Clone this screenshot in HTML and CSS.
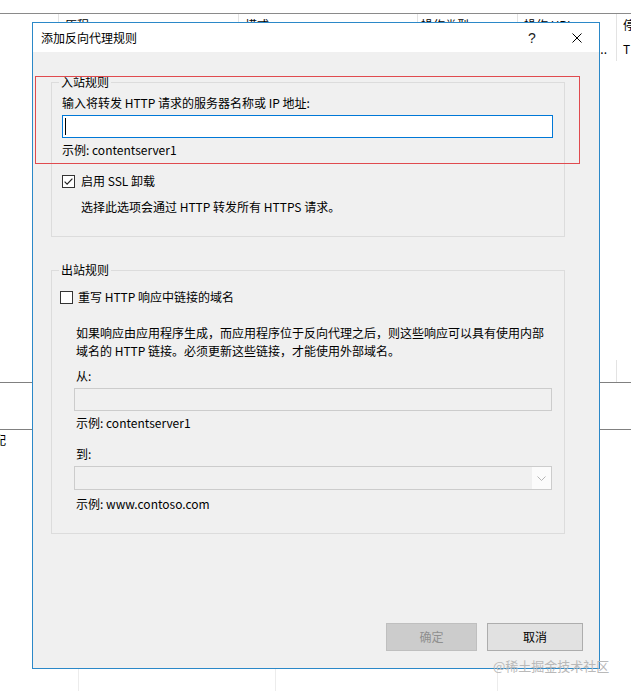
FILE: index.html
```html
<!DOCTYPE html>
<html lang="zh-CN">
<head>
<meta charset="utf-8">
<title>添加反向代理规则</title>
<link rel="stylesheet" href="styles.css">
</head>
<body>
<div class="bg">
  <div class="bg-top"></div>
  <div class="bg-row bg-head">
    <div class="c"></div><div class="c">原程</div><div class="c">模式</div><div class="c c-tight">操作类型</div><div class="c">操作 URL</div><div class="c c-last">停止处理</div>
  </div>
  <div class="bg-row bg-row2">
    <div class="c"></div><div class="c"></div><div class="c"></div><div class="c"></div><div class="c c-right">http://...</div><div class="c c-last">T</div>
  </div>
  <div class="bg-fill1"></div>
  <div class="bg-row bg-row3">
    <div class="c"></div><div class="c"></div><div class="c"></div><div class="c"></div><div class="c"></div><div class="c c-last"></div>
  </div>
  <div class="bg-fill2"></div>
  <div class="bg-row4"><span class="cut">配</span></div>
  <div class="bg-fill3"></div>
  <div class="bg-bottom">
    <div class="b1"></div><div class="b2"></div><div class="b3"></div><div class="b4"></div>
  </div>
</div>

<div class="dialog">
  <div class="titlebar">
    <span class="title">添加反向代理规则</span>
    <span class="help">?</span>
    <svg class="close" width="10" height="10" viewBox="0 0 10 10"><path d="M0.5 0.5 L9.5 9.5 M9.5 0.5 L0.5 9.5" stroke="#000" stroke-width="1" fill="none"/></svg>
  </div>
  <div class="body">
    <fieldset class="group">
      <legend>入站规则</legend>
      <div class="g1-inner">
        <div class="line">输入将转发 HTTP 请求的服务器名称或 IP 地址:</div>
        <div class="textbox"><span class="caret"></span></div>
        <div class="line mt3">示例: contentserver1</div>
        <div class="check-row mt13">
          <svg class="cb" width="13" height="13" viewBox="0 0 13 13"><rect x="0.5" y="0.5" width="12" height="12" fill="#fff" stroke="#333"/><path d="M2.6 6.6 L5.1 9.1 L10.4 3.6" stroke="#222" stroke-width="1.2" fill="none"/></svg>
          <span class="line cb-label1">启用 SSL 卸载</span>
        </div>
        <div class="line desc">选择此选项会通过 HTTP 转发所有 HTTPS 请求。</div>
      </div>
    </fieldset>

    <fieldset class="group group2">
      <legend>出站规则</legend>
      <div class="g2-inner">
        <div class="check-row">
          <svg class="cb" width="13" height="13" viewBox="0 0 13 13"><rect x="0.5" y="0.5" width="12" height="12" fill="#fff" stroke="#333"/></svg>
          <span class="line cb-label2">重写 HTTP 响应中链接的域名</span>
        </div>
        <div class="indent">
          <p class="line para">如果响应由应用程序生成，而应用程序位于反向代理之后，则这些响应可以具有使用内部<br>域名的 HTTP 链接。必须更新这些链接，才能使用外部域名。</p>
          <div class="line txt mt7">从:</div>
          <div class="textbox disabled mt2"></div>
          <div class="line txt mt3">示例: contentserver1</div>
          <div class="line txt mt13">到:</div>
          <div class="combo">
            <div class="combo-text"></div>
            <div class="combo-arrow"><svg width="9" height="5" viewBox="0 0 9 5"><path d="M0.5 0.5 L4.5 4.5 L8.5 0.5" stroke="#b5b5b5" stroke-width="1" fill="none"/></svg></div>
          </div>
          <div class="line txt mt5">示例: www.contoso.com</div>
        </div>
      </div>
    </fieldset>

    <div class="actions">
      <button class="btn btn-ok" disabled>确定</button>
      <button class="btn btn-cancel">取消</button>
    </div>
  </div>
  <div class="highlight"></div>
</div>

<div class="watermark">@稀土掘金技术社区</div>
</body>
</html>
```

FILE: styles.css
```css
* { box-sizing: border-box; }
html, body { margin: 0; padding: 0; }
body {
  width: 631px;
  height: 691px;
  overflow: hidden;
  position: relative;
  background: #fff;
  color: #000;
  font-family: "Noto Sans CJK SC", "Microsoft YaHei", sans-serif;
  font-size: 12px;
}

/* ---------- background window ---------- */
.bg { display: flex; flex-direction: column; width: 631px; height: 691px; }
.bg-top { height: 14px; border-bottom: 1px solid #8a8a8a; flex: none; }
.bg-row {
  display: grid;
  grid-template-columns: 59px 180px 179px 100px 99px 1fr;
  flex: none;
}
.c {
  border-right: 1px solid #e3e3e3;
  padding-left: 6px;
  line-height: 16px;
  white-space: nowrap;
  overflow: hidden;
}
.c-tight { padding-left: 3px; }
.c-last { border-right: none; }
.c-right { text-align: right; padding-right: 9px; }
.bg-head { height: 22px; }
.bg-head .c { padding-top: 3px; }
.bg-row2 { height: 25px; }
.bg-row2 .c { padding-top: 5px; line-height: 16px; }
.bg-fill1 { height: 299px; flex: none; }
.bg-row3 { height: 23px; border-bottom: 1px solid #808080; }
.bg-fill2 { height: 47px; flex: none; border-bottom: 1px solid #808080; }
.bg-row4 { height: 22px; flex: none; line-height: 20px; }
.cut { display: inline-block; margin-left: -6px; }
.bg-fill3 { flex: 1; }
.bg-bottom {
  height: 22px;
  flex: none;
  display: grid;
  grid-template-columns: 79px 197px 222px 1fr;
}
.bg-bottom div { border-right: 1px solid #ececec; }
.bg-bottom .b4 { border-right: none; }

/* ---------- dialog ---------- */
.dialog {
  position: absolute;
  left: 32px;
  top: 22px;
  width: 568px;
  height: 647px;
  border: 1px solid #2b88c8;
  background: #f0f0f0;
  display: flex;
  flex-direction: column;
}
.titlebar {
  height: 29px;
  flex: none;
  background: #fff;
  display: flex;
  align-items: center;
  padding: 0 17px 0 8px;
  line-height: 16px;
}
.title { flex: 1; }
.help {
  width: 20px;
  text-align: center;
  font-family: "Liberation Sans", sans-serif;
  font-size: 14px;
  color: #222;
  margin-right: 30px;
}
.close { display: block; }

.body {
  flex: 1;
  display: flex;
  flex-direction: column;
  padding: 23px 16px 17px 18px;
}

.line { line-height: 18px; margin: 0; }
.mt2 { margin-top: 2px; }
.mt3 { margin-top: 3px; }
.mt5 { margin-top: 5px; }
.mt7 { margin-top: 7px; }
.mt13 { margin-top: 13px; }

.group {
  margin: 0;
  padding: 0;
  border: 1px solid #dcdcdc;
  width: 514px;
  min-width: 0;
}
.group legend {
  margin-left: 7px;
  padding: 0 2px;
  line-height: 14px;
}
.group2 { margin-top: 26px; }

.g1-inner { padding: 5px 11px 20px 10px; }
.g2-inner { padding: 11px 11px 20px 8px; }

.textbox {
  height: 23px;
  border: 1px solid #0078d7;
  background: #fff;
  margin-top: 3px;
  display: flex;
  align-items: center;
  padding-left: 2px;
}
.caret { width: 1px; height: 17px; background: #000; }
.textbox.disabled {
  border-color: #cccccc;
  background: #f0f0f0;
}

.check-row { display: flex; align-items: center; height: 18px; }
.cb { display: block; flex: none; }
.cb-label1 { margin-left: 6px; }
.cb-label2 { margin-left: 5px; }
.desc { margin-top: 8px; padding-left: 19px; }

.indent { margin-left: 14px; width: 478px; }
.para { margin-top: 18px; padding-left: 2px; }
.txt { padding-left: 2px; }

.combo {
  margin-top: 3px;
  height: 24px;
  border: 1px solid #cccccc;
  display: flex;
}
.combo-text { flex: 1; background: #f0f0f0; }
.combo-arrow {
  width: 19px;
  background: #fbfbfb;
  display: flex;
  align-items: center;
  justify-content: center;
}
.combo-arrow svg { display: block; }

.actions {
  margin-top: auto;
  display: flex;
  justify-content: flex-end;
  gap: 10px;
}
.btn {
  height: 28px;
  font-family: "Noto Sans CJK SC", "Microsoft YaHei", sans-serif;
  font-size: 12px;
  line-height: 16px;
  padding: 0;
  margin: 0;
  border-radius: 0;
}
.btn-ok {
  width: 91px;
  background: #cccccc;
  border: 1px solid #bfbfbf;
  color: #8f8f8f;
}
.btn-cancel {
  width: 96px;
  background: #e1e1e1;
  border: 1px solid #adadad;
  color: #000;
}

.highlight {
  position: absolute;
  left: 2px;
  top: 53px;
  width: 545px;
  height: 88px;
  border: 1px solid #e04a4f;
  pointer-events: none;
}

.watermark {
  position: absolute;
  left: 493px;
  top: 658px;
  font-size: 13px;
  line-height: 15px;
  color: #b9b9b9;
  white-space: nowrap;
}
```
